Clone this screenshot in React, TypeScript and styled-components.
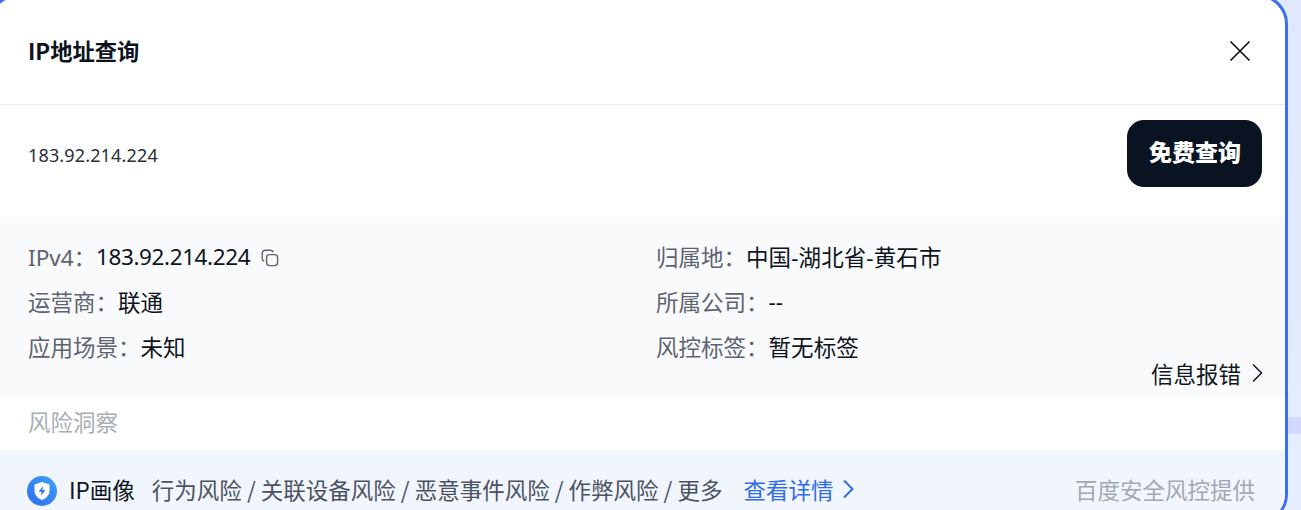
import styled, { createGlobalStyle } from "styled-components";

const GlobalStyle = createGlobalStyle`
  html, body {
    margin: 0;
    padding: 0;
    overflow: hidden;
  }
  body {
    font-family: "Noto Sans", "Noto Sans CJK SC", sans-serif;
  }
`;

const cjk = `"Noto Sans CJK SC", "Noto Sans", sans-serif`;
const latin = `"Noto Sans", "Noto Sans CJK SC", sans-serif`;

type infoItem = {
  label: string;
  value: string;
  copy?: boolean;
};

const infoItems: infoItem[] = [
  { label: "IPv4：", value: "183.92.214.224", copy: true },
  { label: "归属地：", value: "中国-湖北省-黄石市" },
  { label: "运营商：", value: "联通" },
  { label: "所属公司：", value: "--" },
  { label: "应用场景：", value: "未知" },
  { label: "风控标签：", value: "暂无标签" },
];

const Stage = styled.div`
  width: 1301px;
  height: 510px;
  overflow: hidden;
  background:
    linear-gradient(
      180deg,
      transparent 0,
      transparent 417px,
      #d3d9fa 417px,
      #d3d9fa 434px,
      transparent 434px
    ),
    linear-gradient(180deg, #dfe8fd 0%, #e3e9fd 60%, #e6effd 100%);
`;

const Panel = styled.div`
  width: 1300px;
  height: 530px;
  margin: -6px 0 0 -12px;
  box-sizing: border-box;
  border: 3px solid #3a6ff0;
  border-radius: 30px;
  background: #ffffff;
  overflow: hidden;
`;

const Header = styled.div`
  height: 108px;
  box-sizing: border-box;
  display: flex;
  align-items: center;
  justify-content: space-between;
  padding: 0 34px 1px 37px;
  border-bottom: 1px solid #e9ebef;
`;

const Title = styled.div`
  font-family: ${cjk};
  font-size: 22.3px;
  font-weight: 700;
  color: #0b1320;
`;

const CloseButton = styled.button`
  display: flex;
  padding: 2px 0 0;
  border: 0;
  background: none;
  color: #10151f;
`;

const QueryRow = styled.div`
  height: 112px;
  box-sizing: border-box;
  display: flex;
  align-items: center;
  justify-content: space-between;
  padding: 0 23px 15px 37px;
`;

const QueryText = styled.div`
  padding-top: 3px;
  font-family: ${latin};
  font-size: 18px;
  letter-spacing: 0.15px;
  color: #2a303a;
`;

const QueryButton = styled.button`
  width: 135px;
  height: 67px;
  padding: 0 0 6px 1px;
  border: 0;
  border-radius: 17px;
  background: #0a1321;
  color: #ffffff;
  font-family: ${cjk};
  font-size: 23px;
  font-weight: 900;
`;

const InfoSection = styled.div`
  position: relative;
  height: 180px;
  box-sizing: border-box;
  padding: 17px 0 0 37px;
  background: #f9fafb;
`;

const InfoGrid = styled.div`
  display: grid;
  grid-template-columns: 628px 1fr;
  grid-auto-rows: 45px;
`;

const InfoCell = styled.div`
  display: flex;
  align-items: center;
  font-size: 22.5px;
`;

const InfoLabel = styled.span`
  font-family: ${latin};
  color: #5d6470;
`;

const InfoValue = styled.span<{ $numeric?: boolean }>`
  font-family: ${latin};
  color: #0e1420;
  letter-spacing: ${(p) => (p.$numeric ? "-0.4px" : "0.1px")};
`;

const CopyIcon = styled.svg`
  margin: 2px 0 0 11px;
  color: #5d6470;
`;

const ReportLink = styled.div`
  position: absolute;
  right: 21px;
  bottom: 8px;
  display: flex;
  align-items: center;
  gap: 10px;
  font-family: ${cjk};
  font-size: 22.5px;
  color: #111722;
`;

const SectionLabel = styled.div`
  height: 53px;
  box-sizing: border-box;
  padding: 5px 0 0 37px;
  font-family: ${cjk};
  font-size: 22.5px;
  line-height: 38px;
  color: #a9adb4;
`;

const InsightBar = styled.div`
  height: 80px;
  box-sizing: border-box;
  display: flex;
  align-items: center;
  padding: 0 30px 2px 36px;
  background: #f1f5fd;
  font-family: ${cjk};
  font-size: 22.5px;
  white-space: nowrap;
`;

const ShieldBadge = styled.svg`
  flex: none;
  margin: 4px 12px 0 0;
`;

const InsightName = styled.span`
  color: #0e1420;
  margin-right: 17px;
`;

const InsightDesc = styled.span`
  color: #4b5361;
  margin-right: 21px;
`;

const DetailLink = styled.span`
  display: flex;
  align-items: center;
  gap: 9px;
  color: #2f6de6;
`;

const Source = styled.span`
  margin-left: auto;
  color: #a2a8b2;
`;

function Chevron({ color, weight }: { color: string; weight: number }) {
  return (
    <svg width="13" height="20" viewBox="0 0 13 20" fill="none">
      <path d="M2 1.5 L10.5 10 L2 18.5" stroke={color} strokeWidth={weight} />
    </svg>
  );
}

export default function App() {
  return (
    <Stage>
      <GlobalStyle />
      <Panel>
        <Header>
          <Title>IP地址查询</Title>
          <CloseButton>
            <svg width="22" height="22" viewBox="0 0 22 22" fill="none">
              <path d="M1.5 1.5 L20.5 20.5 M20.5 1.5 L1.5 20.5" stroke="currentColor" strokeWidth="1.7" />
            </svg>
          </CloseButton>
        </Header>
        <QueryRow>
          <QueryText>183.92.214.224</QueryText>
          <QueryButton>免费查询</QueryButton>
        </QueryRow>
        <InfoSection>
          <InfoGrid>
            {infoItems.map((item) => (
              <InfoCell key={item.label}>
                <InfoLabel>{item.label}</InfoLabel>
                <InfoValue $numeric={item.copy}>{item.value}</InfoValue>
                {item.copy && (
                  <CopyIcon width="18" height="18" viewBox="0 0 18 18" fill="none" stroke="currentColor" strokeWidth="1.4">
                    <path d="M3.2 12.2 C2 11.8 1.2 10.8 1.2 9.6 V4.2 C1.2 2.5 2.5 1.2 4.2 1.2 H9.6 C10.8 1.2 11.8 2 12.2 3.2" />
                    <rect x="5.6" y="5.6" width="11" height="11" rx="3" />
                  </CopyIcon>
                )}
              </InfoCell>
            ))}
          </InfoGrid>
          <ReportLink>
            信息报错
            <Chevron color="#111722" weight={1.5} />
          </ReportLink>
        </InfoSection>
        <SectionLabel>风险洞察</SectionLabel>
        <InsightBar>
          <ShieldBadge width="30" height="30" viewBox="0 0 30 30">
            <defs>
              <linearGradient id="badge" x1="0" y1="1" x2="1" y2="0">
                <stop offset="0" stopColor="#2f6cf0" />
                <stop offset="1" stopColor="#3fa2f7" />
              </linearGradient>
            </defs>
            <circle cx="15" cy="15" r="15" fill="url(#badge)" />
            <path d="M15 6 L22.5 8.6 V14.5 C22.5 19 19.4 22.2 15 24 C10.6 22.2 7.5 19 7.5 14.5 V8.6 Z" fill="#ffffff" />
            <path d="M16.2 9.8 L11.6 15.8 H14.6 L13.8 20 L18.4 14 H15.4 Z" fill="#2f7cf2" />
          </ShieldBadge>
          <InsightName>IP画像</InsightName>
          <InsightDesc>行为风险 / 关联设备风险 / 恶意事件风险 / 作弊风险 / 更多</InsightDesc>
          <DetailLink>
            查看详情
            <Chevron color="#2f6de6" weight={2} />
          </DetailLink>
          <Source>百度安全风控提供</Source>
        </InsightBar>
      </Panel>
    </Stage>
  );
}
